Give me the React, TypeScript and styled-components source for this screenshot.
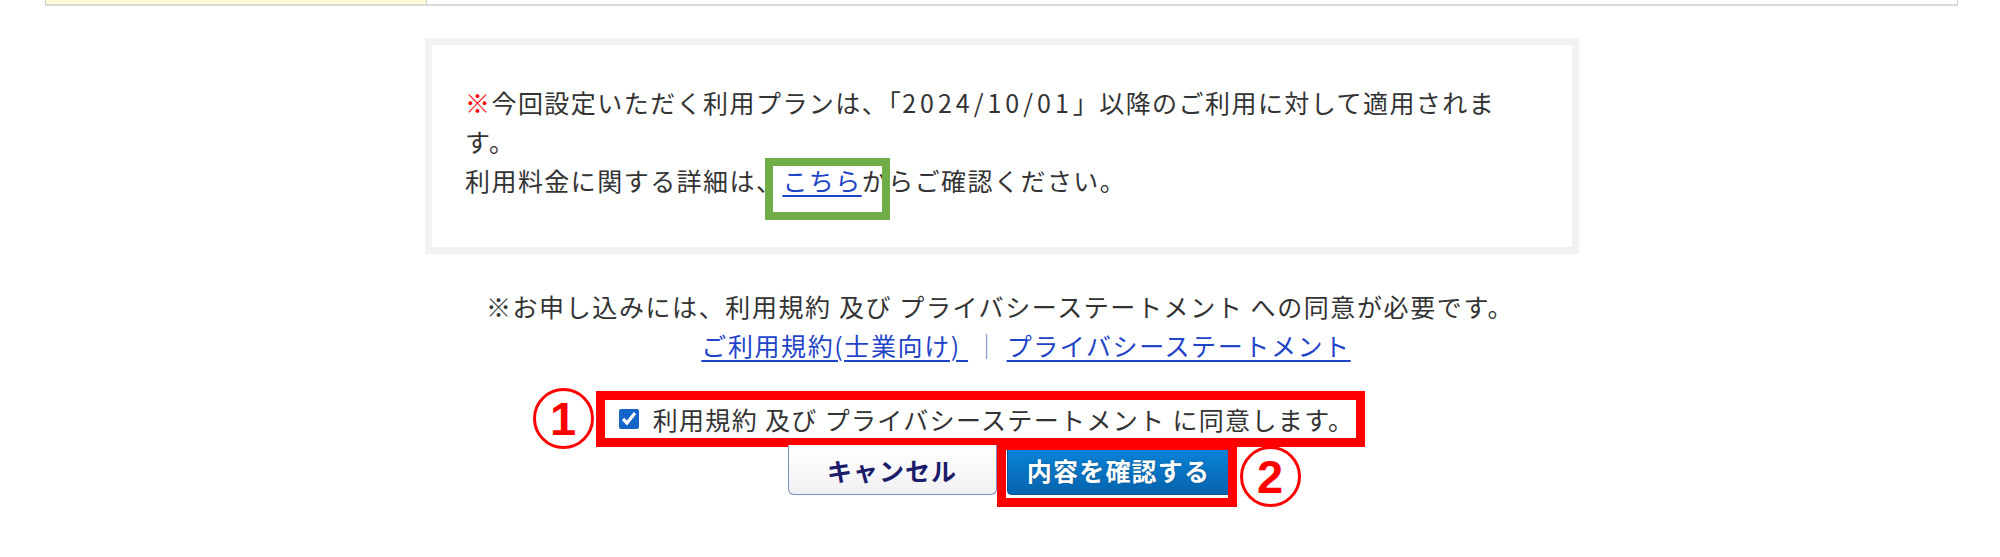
import React from 'react'
import styled, { createGlobalStyle } from 'styled-components'

const GlobalStyle = createGlobalStyle`
  html, body {
    margin: 0;
    padding: 0;
    background: #ffffff;
  }
  body {
    font-family: "Noto Sans CJK JP", "Noto Sans", sans-serif;
    color: #333333;
  }
`

const App: React.FunctionComponent = () => {
  return (
    <Page>
      <GlobalStyle />
      <TopTable>
        <HeadCell />
        <BodyCell />
      </TopTable>

      <NoticeBox>
        <NoticeText>
          <Mark>※</Mark>今回設定いただく利用プランは、「<DateText>2024/10/01</DateText>」以降のご利用に対して適用されま
          <br />
          す。
          <br />
          利用料金に関する詳細は、
          <Highlight>
            <Link href="#">こちら</Link>
          </Highlight>
          からご確認ください。
        </NoticeText>
      </NoticeBox>

      <AgreeNote>
        <div>※お申し込みには、利用規約 及び プライバシーステートメント への同意が必要です。</div>
        <LinkLine>
          <Link href="#">ご利用規約(士業向け) </Link>
          <Separator>｜</Separator>
          <Link href="#">プライバシーステートメント</Link>
        </LinkLine>
      </AgreeNote>

      <CheckRow>
        <StepMark>1</StepMark>
        <RedFrame>
          <AgreeLabel>
            <CheckInput type="checkbox" defaultChecked />
            <span>利用規約 及び プライバシーステートメント に同意します。</span>
          </AgreeLabel>
        </RedFrame>
      </CheckRow>

      <ButtonRow>
        <CancelButton type="button">キャンセル</CancelButton>
        <ConfirmWrap>
          <ConfirmButton type="button">内容を確認する</ConfirmButton>
          <ButtonFrame />
          <StepMarkSide>2</StepMarkSide>
        </ConfirmWrap>
      </ButtonRow>
    </Page>
  )
}

const Page = styled.div`
  width: 2000px;
  height: 557px;
  overflow: hidden;
`

const TopTable = styled.div`
  display: flex;
  margin: 0 42px 0 45px;
  height: 4px;
  border-left: 1px solid #cfcfcf;
  border-right: 1px solid #cfcfcf;
  border-bottom: 2px solid #d9d9d9;
`

const HeadCell = styled.div`
  width: 380px;
  background: #fffcd9;
  border-right: 1px solid #cfcfcf;
`

const BodyCell = styled.div`
  flex: 1;
  background: #ffffff;
`

const NoticeBox = styled.div`
  box-sizing: border-box;
  width: 1154px;
  margin: 32px 0 0 425px;
  border: 7px solid #f2f2f2;
  padding: 38px 30px 47px 33px;
`

const NoticeText = styled.p`
  margin: 0;
  font-size: 25px;
  line-height: 39px;
  letter-spacing: 1.45px;
  color: #333333;
  white-space: nowrap;
`

const DateText = styled.span`
  letter-spacing: 4px;
`

const Mark = styled.span`
  color: #ff0000;
`

const Highlight = styled.span`
  position: relative;
  &::after {
    content: '';
    position: absolute;
    left: -17px;
    right: -28px;
    top: -4px;
    bottom: -22px;
    border: 8px solid #70ad47;
    pointer-events: none;
  }
`

const Link = styled.a`
  color: #1f44c8;
  text-decoration: underline;
  text-underline-offset: 4px;
`

const AgreeNote = styled.div`
  margin-top: 33px;
  text-align: center;
  font-size: 25px;
  line-height: 39px;
  letter-spacing: 1.6px;
  color: #333333;
`

const LinkLine = styled.div`
  padding-left: 52px;
`

const Separator = styled.span`
  color: #7d8bc4;
  margin: 0 6px;
`

const CheckRow = styled.div`
  display: flex;
  justify-content: center;
  align-items: center;
  gap: 2px;
  margin-top: 23px;
  padding-right: 102px;
`

const StepMark = styled.div`
  box-sizing: border-box;
  width: 61px;
  height: 61px;
  border: 3px solid #ff0000;
  border-radius: 50%;
  color: #ff0000;
  font-family: "Liberation Sans", Arial, sans-serif;
  font-weight: 700;
  font-size: 47px;
  line-height: 55px;
  text-align: center;
`

const RedFrame = styled.div`
  border: 9px solid #ff0000;
  background: #ffffff;
`

const AgreeLabel = styled.label`
  display: flex;
  align-items: center;
  gap: 14px;
  height: 38px;
  padding: 0 2px 0 14px;
  font-size: 25px;
  letter-spacing: 1.35px;
  color: #333333;
  white-space: nowrap;
`

const CheckInput = styled.input`
  width: 20px;
  height: 20px;
  margin: 0;
  accent-color: #1565c9;
`

const ButtonRow = styled.div`
  display: flex;
  justify-content: center;
  gap: 10px;
  margin-top: -4px;
  padding-left: 18px;
`

const ButtonBase = styled.button`
  box-sizing: border-box;
  height: 50px;
  padding: 0;
  font-family: "Noto Sans CJK JP", sans-serif;
  font-weight: 700;
  font-size: 25px;
  cursor: pointer;
`

const CancelButton = styled(ButtonBase)`
  width: 209px;
  letter-spacing: 1px;
  color: #1c1c6a;
  background: linear-gradient(#ffffff, #f1f1f4);
  border: 1px solid #7f8cc6;
  border-top: none;
  border-radius: 0 0 6px 6px;
`

const ConfirmWrap = styled.div`
  position: relative;
`

const ConfirmButton = styled(ButtonBase)`
  width: 224px;
  letter-spacing: 1.2px;
  color: #ffffff;
  background: linear-gradient(#0a86dc, #0663ad);
  border: 1px solid #0b5596;
  border-radius: 4px;
  text-shadow: 0 0 2px rgba(0, 0, 0, 0.35);
`

const ButtonFrame = styled.div`
  position: absolute;
  left: -10px;
  right: -6px;
  top: -4px;
  bottom: -12px;
  border: 9px solid #ff0000;
  pointer-events: none;
`

const StepMarkSide = styled(StepMark)`
  position: absolute;
  left: 233px;
  top: 1px;
`

export default App
